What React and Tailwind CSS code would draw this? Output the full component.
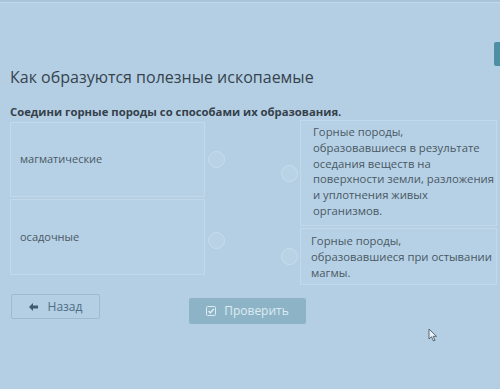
import React from 'react';

const Dot = () => (
  <span className="block w-[17px] h-[17px] rounded-full border border-[#c9dded] bg-[#b9d3e6]"></span>
);

export default function App() {
  return (
    <div className="w-[500px] h-[389px] overflow-hidden bg-[#b4cfe4] text-[#3c4a55] font-['Open_Sans',sans-serif]">
      <div className="h-[3px] bg-[#a9c4d8] border-b border-[#c3d9ea]"></div>

      {/* header row with clipped button at right */}
      <div className="flex justify-end pt-[39px]">
        <div className="w-[6px] h-[24px] bg-[#4f8fa6] rounded-l-[2px]"></div>
      </div>

      <h1 className="pl-[10px] pt-[1px] text-[16px] leading-[20px] text-[#36434d]">
        Как образуются полезные ископаемые
      </h1>

      <p className="pl-[10px] pt-[17px] text-[11.3px] leading-[16px] font-bold text-[#34414b]">
        Соедини горные породы со способами их образования.
      </p>

      {/* matching area */}
      <div className="flex">
        <div className="ml-[10px] w-[195px] flex flex-col gap-[2px] pt-[2px]">
          <div className="h-[75px] flex items-center pl-[9px] border border-[#c2d9eb] bg-[#b6d1e6] text-[11px] text-[#4a5863]">
            магматические
          </div>
          <div className="h-[76px] flex items-center pl-[9px] border border-[#c2d9eb] bg-[#b6d1e6] text-[11px] text-[#4a5863]">
            осадочные
          </div>
        </div>

        <div className="w-[22px] flex flex-col gap-[2px] pt-[2px]">
          <div className="h-[75px] flex items-center justify-center"><Dot /></div>
          <div className="h-[76px] flex items-center justify-center pt-[6px]"><Dot /></div>
        </div>

        <div className="w-[51px]"></div>

        <div className="w-[22px] flex flex-col gap-[2px]">
          <div className="h-[106px] flex items-center justify-center"><Dot /></div>
          <div className="h-[57px] flex items-center justify-center"><Dot /></div>
        </div>

        <div className="w-[197px] flex flex-col gap-[2px]">
          <div className="h-[106px] pl-[12px] pt-[3px] border border-[#c2d9eb] bg-[#b6d1e6] text-[11.3px] leading-[15.8px] text-[#4a5863]">
            Горные породы, образовавшиеся в результате оседания веществ на поверхности земли, разложения и уплотнения живых организмов.
          </div>
          <div className="h-[57px] pl-[10px] pt-[4px] border border-[#c2d9eb] bg-[#b6d1e6] text-[11.3px] leading-[15.8px] text-[#4a5863]">
            Горные породы, образовавшиеся при остывании магмы.
          </div>
        </div>
      </div>

      {/* buttons */}
      <div className="flex items-start pt-[9px]">
        <button className="ml-[11px] w-[89px] h-[25px] flex items-center justify-center gap-[10px] border border-[#9ebacd] rounded-[2px] text-[12px] text-[#4d6d82]">
          <svg width="9" height="8" viewBox="0 0 9 8">
            <path d="M0 4 L4 0 L4 2.5 L9 2.5 L9 5.5 L4 5.5 L4 8 Z" fill="#3f5c70" />
          </svg>
          <span>Назад</span>
        </button>
        <button className="ml-[89px] mt-[4px] w-[117px] h-[26px] flex items-center justify-center gap-[8px] rounded-[2px] bg-[#8db4c6] text-[12px] text-[#dcebf3]">
          <svg width="10" height="10" viewBox="0 0 10 10">
            <rect x="0.5" y="0.5" width="9" height="9" rx="1" fill="none" stroke="#dcebf3" strokeWidth="1" />
            <path d="M2.5 5 L4.3 6.8 L7.8 3" fill="none" stroke="#dcebf3" strokeWidth="1.5" />
          </svg>
          <span>Проверить</span>
        </button>
        <div className="ml-[122px] mt-[34px]">
          <svg width="12" height="14" viewBox="0 0 12 14">
            <path d="M1 1 L1 11 L3.5 8.8 L5.5 13 L7 12.3 L5.2 8.3 L8.5 8.3 Z" fill="#e8f1f7" stroke="#3c4a55" strokeWidth="0.8" />
          </svg>
        </div>
      </div>
    </div>
  );
}
